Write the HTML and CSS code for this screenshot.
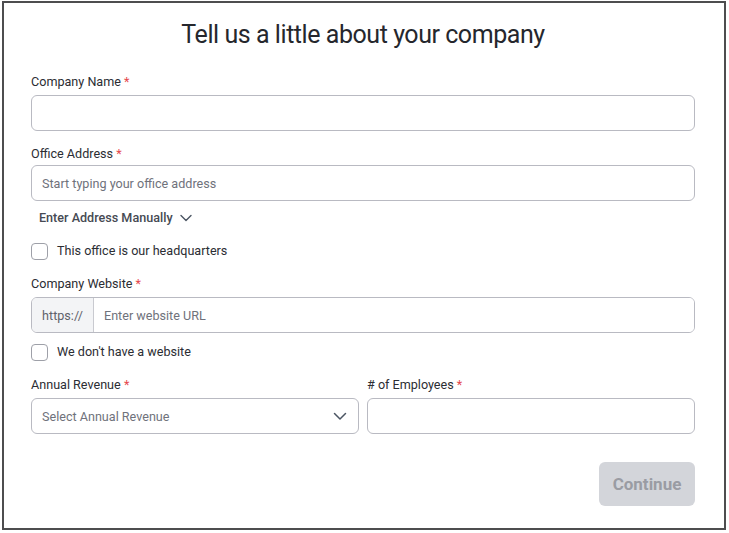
FILE: index.html
```html
<!DOCTYPE html>
<html lang="en">
<head>
<meta charset="utf-8">
<title>Tell us a little about your company</title>
<link rel="stylesheet" href="styles.css">
</head>
<body>
<div class="frame">
  <h1 class="title">Tell us a little about your company</h1>
  <form class="form">
    <div class="field field-name">
      <label class="label">Company Name <span class="req">*</span></label>
      <input class="input" type="text">
    </div>
    <div class="field field-address">
      <label class="label">Office Address <span class="req">*</span></label>
      <input class="input" type="text" placeholder="Start typing your office address">
    </div>
    <button type="button" class="manual">Enter Address Manually
      <svg class="chev-sm" width="12" height="8" viewBox="0 0 12 8"><path d="M1 1.5l5 5 5-5" fill="none" stroke="#4b5563" stroke-width="1.4" stroke-linecap="round" stroke-linejoin="round"/></svg>
    </button>
    <label class="check check-hq"><span class="box"></span>This office is our headquarters</label>
    <div class="field field-web">
      <label class="label">Company Website <span class="req">*</span></label>
      <div class="group">
        <span class="prefix">https://</span>
        <input class="group-input" type="text" placeholder="Enter website URL">
      </div>
    </div>
    <label class="check check-web"><span class="box"></span>We don't have a website</label>
    <div class="row">
      <div class="field">
        <label class="label">Annual Revenue <span class="req">*</span></label>
        <div class="select">
          <span class="select-text">Select Annual Revenue</span>
          <svg class="chev" width="14" height="9" viewBox="0 0 14 9"><path d="M1.5 1.5l5.5 5.5 5.5-5.5" fill="none" stroke="#4b5563" stroke-width="1.5" stroke-linecap="round" stroke-linejoin="round"/></svg>
        </div>
      </div>
      <div class="field">
        <label class="label"># of Employees <span class="req">*</span></label>
        <input class="input" type="text">
      </div>
    </div>
    <div class="actions">
      <button type="button" class="continue" disabled>Continue</button>
    </div>
  </form>
</div>
</body>
</html>
```

FILE: styles.css
```css
* { box-sizing: border-box; }
html, body { margin: 0; padding: 0; background: #fff; }
body {
  font-family: Roboto, "Liberation Sans", Arial, sans-serif;
  color: #2b2d33;
}
.frame {
  margin: 1px 3px 0 2px;
  width: 724px;
  height: 529px;
  border: 2px solid #4d4d4f;
  padding: 0 29px 0 27px;
}
.title {
  margin: 16px 0 0;
  font-size: 25px;
  line-height: 32px;
  font-weight: 400;
  text-align: center;
  color: #25272d;
  letter-spacing: -0.45px;
}
.form { display: flex; flex-direction: column; }
.field { display: flex; flex-direction: column; }
.label {
  font-size: 12.6px;
  line-height: 18px;
  color: #2b2d33;
  margin-bottom: 4px;
}
.req { color: #e5484d; }
.field-name { margin-top: 22px; }
.field-address { margin-top: 14px; }
.field-address .label { margin-bottom: 2px; }
.input {
  height: 36px;
  width: 100%;
  border: 1px solid #b9bac2;
  border-radius: 6px;
  padding: 0 10px;
  font-family: inherit;
  font-size: 12.6px;
  color: #2b2d33;
  background: #fff;
  outline: none;
}
.input::placeholder, .group-input::placeholder { color: #6f727b; }
.manual {
  align-self: flex-start;
  margin: 8px 0 0 8px;
  padding: 0;
  border: 0;
  background: none;
  font-family: inherit;
  font-size: 12.6px;
  font-weight: 500;
  line-height: 17px;
  color: #464a53;
  display: flex;
  align-items: center;
  gap: 7px;
}
.chev-sm { margin-top: 1px; }
.check {
  display: flex;
  align-items: center;
  gap: 9px;
  font-size: 12.6px;
  line-height: 18px;
  color: #2b2d33;
}
.check-hq { margin-top: 16px; }
.box {
  width: 17px;
  height: 17px;
  border: 1.5px solid #9ea0a8;
  border-radius: 4px;
  background: #fff;
  flex: none;
}
.field-web { margin-top: 15px; }
.group {
  display: flex;
  height: 36px;
  border: 1px solid #b9bac2;
  border-radius: 6px;
  overflow: hidden;
}
.prefix {
  width: 62px;
  flex: none;
  background: #f3f4f6;
  border-right: 1px solid #c9cad0;
  display: flex;
  align-items: center;
  justify-content: center;
  font-size: 12.6px;
  color: #5f626b;
}
.group-input {
  flex: 1;
  border: 0;
  padding: 0 10px;
  font-family: inherit;
  font-size: 12.6px;
  outline: none;
}
.check-web { margin-top: 10px; }
.row {
  margin-top: 15px;
  display: grid;
  grid-template-columns: 1fr 1fr;
  gap: 8px;
}
.select {
  height: 36px;
  border: 1px solid #b9bac2;
  border-radius: 6px;
  padding: 0 10px;
  display: flex;
  align-items: center;
  justify-content: space-between;
  font-size: 12.6px;
  color: #6f727b;
}
.chev { margin-right: 1px; }
.actions {
  margin-top: 28px;
  display: flex;
  justify-content: flex-end;
}
.continue {
  width: 96px;
  height: 44px;
  border: 0;
  border-radius: 6px;
  background: #d3d5da;
  color: #9a9ca3;
  font-family: inherit;
  font-size: 17px;
  font-weight: 700;
}
```
